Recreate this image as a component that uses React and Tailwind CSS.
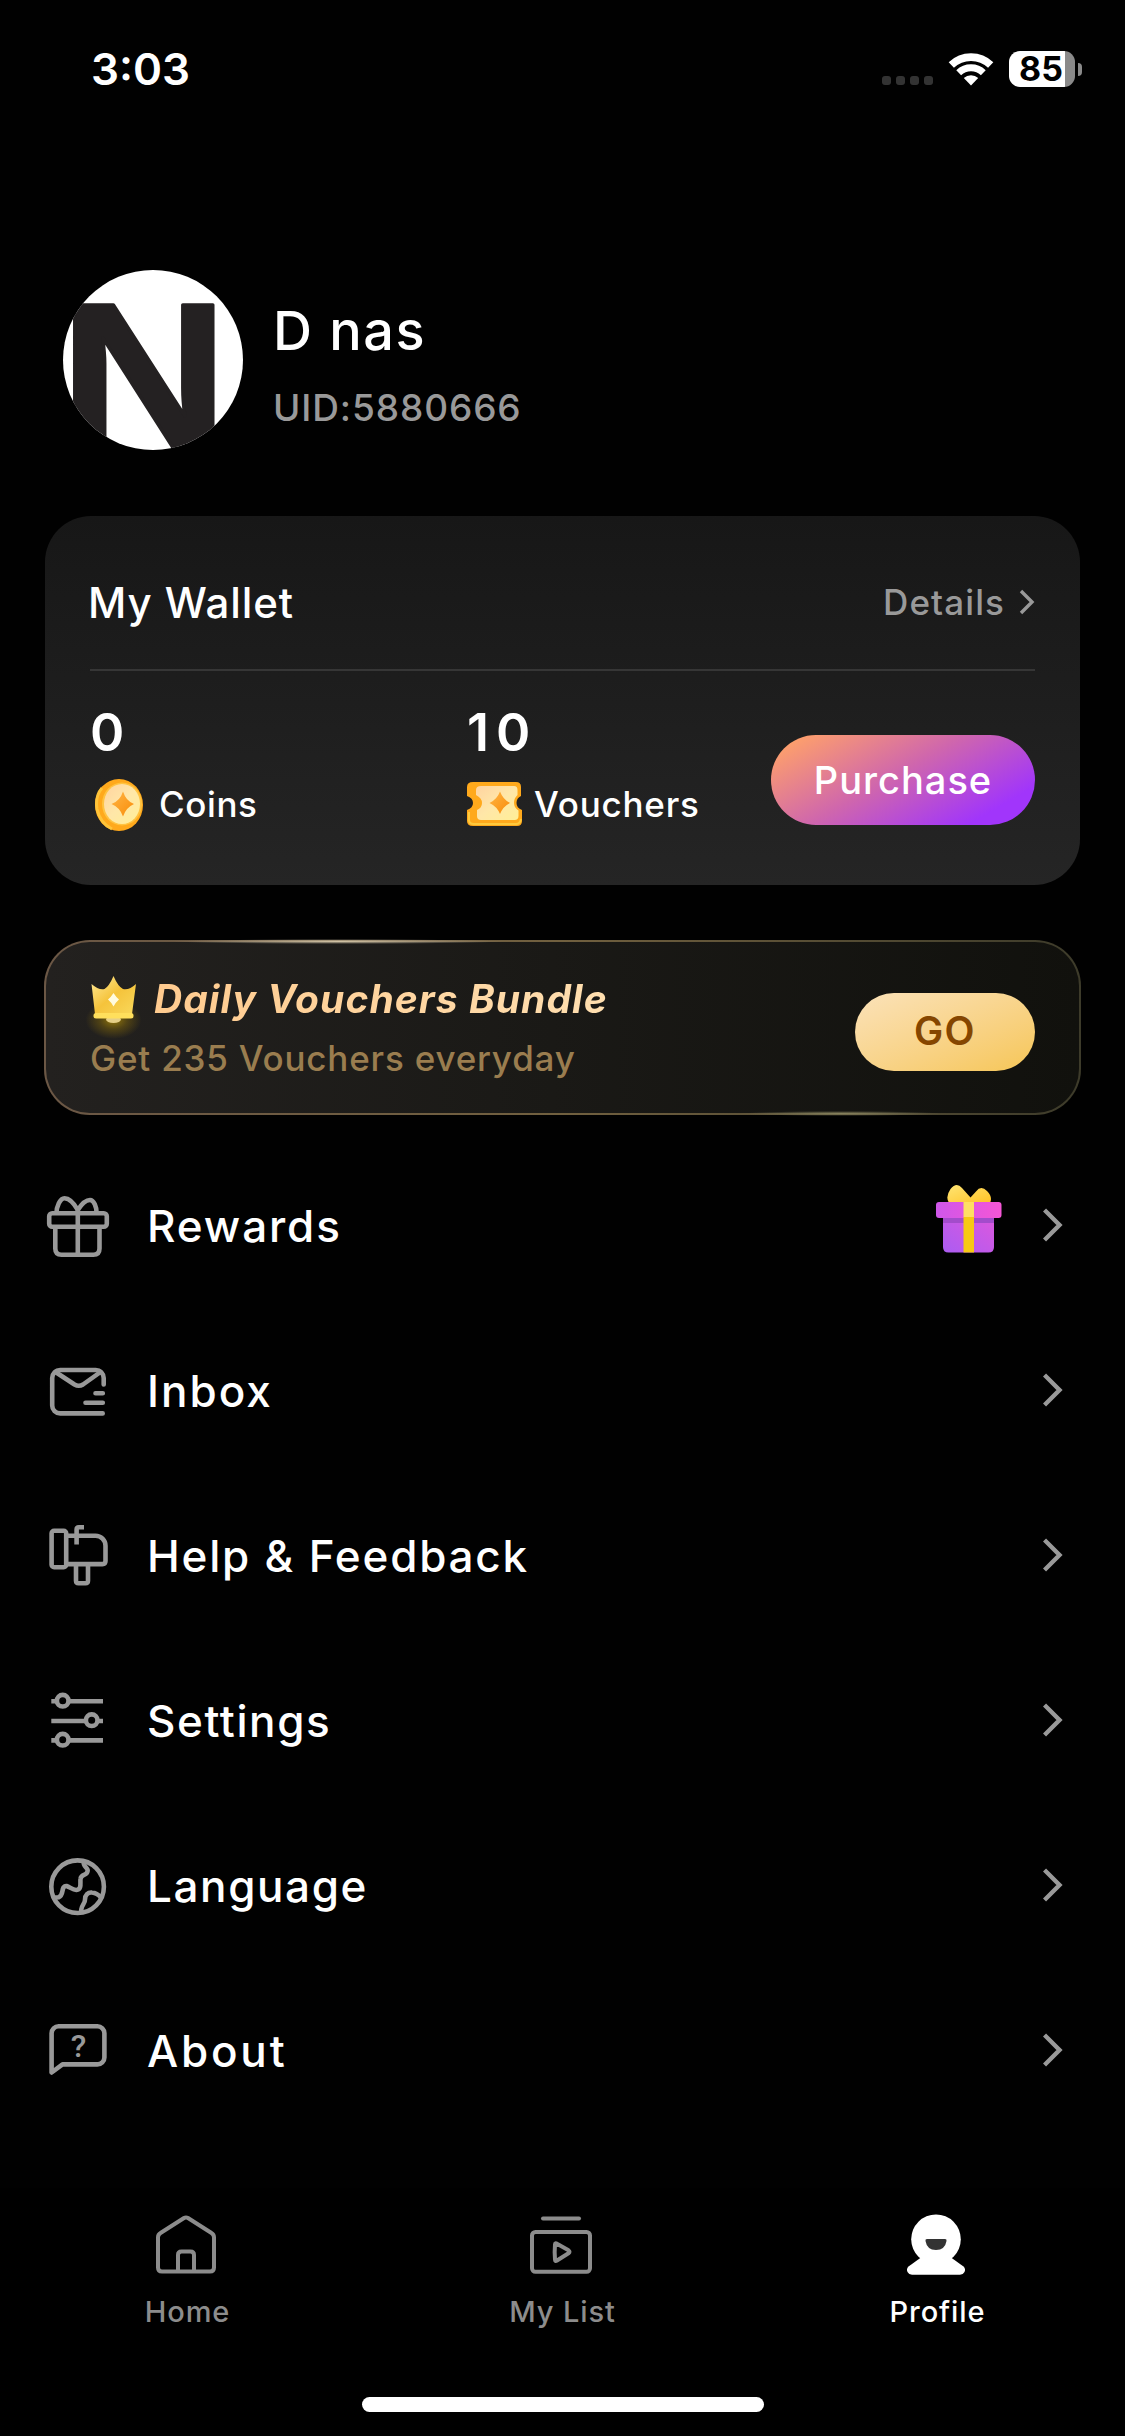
import React, { useState } from 'react';

const iconProps = {
  viewBox: '0 0 66 66',
  fill: 'none',
  stroke: '#999999',
  strokeWidth: 4.6,
  className: 'w-[66px] h-[66px] shrink-0',
};

const GiftIcon = () => (
  <svg {...iconProps} strokeLinejoin="round">
    <rect x="4.2" y="20.2" width="57.6" height="13.6" rx="3" />
    <path d="M10.3 34V55.5q0 6.2 6.2 6.2H48.3q6.2 0 6.2-6.2V34M32.8 17V62" />
    <path d="M11.5 20C11.5 14 15 5.2 19.5 5.2C25 5.2 30 12 32.8 17C36 12 41 7 45 7C49 7 51.6 14 51.6 20" />
  </svg>
);

const InboxIcon = () => (
  <svg {...iconProps} strokeLinecap="round" strokeLinejoin="round">
    <path d="M57.7 55.4H15.2a8 8 0 0 1-8-8V20a8 8 0 0 1 8-8H50.7a8 8 0 0 1 8 8V26.5" />
    <path d="M10.5 14L29.5 26.5Q33.8 29 38 26.5L55.5 14M50.5 35.3H57.8M40.5 44.8H57.8" />
  </svg>
);

const HelpIcon = () => (
  <svg {...iconProps} strokeLinejoin="round">
    <rect x="6.6" y="7.8" width="14.6" height="36.4" rx="2.5" />
    <path d="M21.2 12.8H50.5a10 10 0 0 1 10 10V38.1q0 3-3 3H21.2" />
    <path d="M31 41.5V57.7q0 2.5 2.5 2.5H40.5q2.5 0 2.5-2.5V41.5M31.6 21.5V6.5q0-2.2 2.2-2.2H39" />
  </svg>
);

const SettingsIcon = () => (
  <svg {...iconProps}>
    <path d="M6.3 13.3H12M23.5 13.3H58M6.3 33H41M52.5 33H58M6.3 52.4H12M23.5 52.4H58" />
    <circle cx="17.7" cy="12.7" r="5.8" />
    <circle cx="46.7" cy="32.2" r="5.8" />
    <circle cx="17.7" cy="51.7" r="5.8" />
  </svg>
);

const LanguageIcon = () => (
  <svg {...iconProps} strokeLinejoin="round">
    <circle cx="32.6" cy="33.7" r="26.3" />
    <path d="M38.8 8.5C37.5 14 44 14.5 42.5 18.5C41.5 23 36 21 35.5 26C35 30 37 36.5 31.5 37C26.5 37.5 22 30 18.5 34.5C16.5 38 18.5 42 13.5 44.3Q10.5 44.9 8 44.5" />
    <path d="M36.8 60C34 54 40.5 51 40 46.5C40 42 43 39 47 39.5Q52 40 56 44.5" />
  </svg>
);

const AboutIcon = () => (
  <svg {...iconProps} strokeLinejoin="round">
    <path d="M6.6 54.5V15.3a7 7 0 0 1 7-7H52.4a7 7 0 0 1 7 7V39.4a7 7 0 0 1-7 7H17.5Z" />
    <text x="33.5" y="38.5" textAnchor="middle" fontSize="32" fontWeight="500" fontFamily="Roboto, sans-serif" fill="#999999" stroke="none">
      ?
    </text>
  </svg>
);

const CoinIcon = () => (
  <svg viewBox="0 0 52 54" className="w-[52px] h-[54px] shrink-0">
    <defs>
      <linearGradient id="coinFace" x1="0" y1="0" x2="1" y2="1">
        <stop offset="0" stopColor="#ffd3a0" />
        <stop offset="0.5" stopColor="#ffe7a8" />
        <stop offset="1" stopColor="#ffef96" />
      </linearGradient>
      <linearGradient id="spark" x1="0" y1="0" x2="1" y2="1">
        <stop offset="0" stopColor="#ffb545" />
        <stop offset="1" stopColor="#f98c08" />
      </linearGradient>
    </defs>
    <ellipse cx="25" cy="27" rx="24" ry="26" fill="#ffa91c" />
    <path d="M8 10Q1 18 3 31Q6 45 18 51" fill="none" stroke="#ffc43a" strokeWidth="3" />
    <ellipse cx="28" cy="26" rx="20" ry="21.5" fill="#ffc341" />
    <ellipse cx="28" cy="26" rx="18" ry="20" fill="url(#coinFace)" />
    <path d="M29 13.5Q32 23 40 26Q32 29.5 29 38.5Q26 29.5 17.5 26Q26 23 29 13.5Z" fill="url(#spark)" />
  </svg>
);

const VoucherIcon = () => (
  <svg viewBox="0 0 56 46" className="w-[56px] h-[46px] shrink-0">
    <path d="M6 1H49Q54 1 54 6V15Q49.5 17 49.5 22Q49.5 27 55 29V40Q55 45 50 45H6Q0 45 0 40V29Q6 27 6 22Q6 17 0 15V6Q0 1 6 1Z" fill="#ffa91c" />
    <path d="M2 31V39Q2 43 7 43H49Q53 43 54 38" fill="none" stroke="#ffca3d" strokeWidth="2" />
    <path d="M14 5H47Q50.5 5 50.5 9V14Q47 17 47 22Q47 27 51.5 29.5V35Q51.5 39 47.5 39H14Q10 39 10 35V29Q15 27 15 22Q15 17 9 14V9Q9 5 14 5Z" fill="url(#coinFace)" />
    <path d="M33 10.5Q36 18.5 43 22Q36 25.5 33 33Q30 25.5 22.5 22Q30 18.5 33 10.5Z" fill="url(#spark)" />
  </svg>
);

const CrownIcon = () => (
  <svg viewBox="0 0 46 48" className="w-[46px] h-[48px] shrink-0 overflow-visible">
    <defs>
      <linearGradient id="crown" x1="0" y1="0" x2="1" y2="1">
        <stop offset="0" stopColor="#ffeb9a" />
        <stop offset="0.5" stopColor="#f5c33b" />
        <stop offset="1" stopColor="#f9d95c" />
      </linearGradient>
      <radialGradient id="crownGlow">
        <stop offset="0" stopColor="#d9ae00" stopOpacity="0.65" />
        <stop offset="0.5" stopColor="#b89000" stopOpacity="0.3" />
        <stop offset="1" stopColor="#b89000" stopOpacity="0" />
      </radialGradient>
    </defs>
    <ellipse cx="22.5" cy="44" rx="28" ry="19" fill="url(#crownGlow)" />
    <ellipse cx="22.5" cy="43.5" rx="7.5" ry="3.5" fill="#e6cf86" />
    <path d="M0.5 8Q8 14.5 13.5 13Q18 10.5 22.5 0Q27 10.5 32 13Q38 14.5 45 8L41 38H4Z" fill="url(#crown)" />
    <rect x="2.5" y="37" width="40" height="5.5" rx="2.5" fill="#ffdf5c" />
    <path d="M22.5 17Q25 21 28 23.5Q25 26 22.5 30.5Q20 26 17 23.5Q20 21 22.5 17Z" fill="#fffbe0" />
  </svg>
);

// Coloured present shown on the Rewards row
const PresentIcon = () => (
  <svg viewBox="0 0 66 69" className="w-[66px] h-[69px] shrink-0">
    <defs>
      <linearGradient id="lid" x1="0" y1="0" x2="1" y2="0">
        <stop offset="0" stopColor="#cf57ea" />
        <stop offset="1" stopColor="#f556d6" />
      </linearGradient>
      <linearGradient id="box" x1="0" y1="1" x2="1" y2="0">
        <stop offset="0" stopColor="#ab5cf2" />
        <stop offset="1" stopColor="#dd58de" />
      </linearGradient>
      <linearGradient id="bow" x1="0" y1="0" x2="1" y2="1">
        <stop offset="0" stopColor="#ffe574" />
        <stop offset="1" stopColor="#ffc326" />
      </linearGradient>
    </defs>
    <path d="M13 19Q9 13 14.5 5Q20.5 -2.5 26 4L34.5 13.5L40 7.5Q45 1 51 7Q57 13 54 19Z" fill="url(#bow)" />
    <path d="M7 32H58V63Q58 68.5 52.5 68.5H12.5Q7 68.5 7 63Z" fill="url(#box)" />
    <path d="M7 33H58V39H7Z" fill="#a34ccb" />
    <rect x="0" y="18" width="65.5" height="16" rx="3" fill="url(#lid)" />
    <path d="M27.5 33H38V68.5H27.5Z" fill="#f7c914" />
    <path d="M27.5 18H38V33H27.5Z" fill="#ffdf63" />
  </svg>
);

const HomeIcon = () => (
  <svg viewBox="0 0 66 62" fill="none" stroke="currentColor" strokeWidth="4" strokeLinejoin="round" className="w-[66px] h-[62px]">
    <path d="M9 58.5Q5 58.5 5 54.5V24.5Q5 21.5 7.5 20L31 5Q33 3.8 35 5L58.5 20Q61 21.5 61 24.5V54.5Q61 58.5 57 58.5Z" />
    <path d="M25 58V42Q25 38.5 28.5 38.5H37.5Q41 38.5 41 42V58" />
  </svg>
);

const MyListIcon = () => (
  <svg viewBox="0 0 66 62" fill="none" stroke="currentColor" strokeWidth="4" strokeLinejoin="round" className="w-[66px] h-[62px]">
    <path d="M15 5.5H51" strokeLinecap="round" />
    <rect x="4" y="19" width="58" height="39.8" rx="3.5" />
    <path d="M27 31.5Q27 29.5 29 30.8L40.5 37.3Q42.5 38.8 40.5 40.3L29 47.5Q27 48.7 27 46.5Q26.3 39 27 31.5Z" />
  </svg>
);

const ProfileIcon = () => (
  <svg viewBox="0 0 66 62" fill="currentColor" className="w-[66px] h-[62px]">
    <circle cx="33" cy="26.2" r="24.8" />
    <path d="M18 44.5L5.5 53.5Q3 56 4.5 59Q6 61.8 9 61.8H57Q60 61.8 61.5 59Q63 56 60.5 53.5L48 44.5Z" />
    <path d="M24 26H42Q44 26 43.5 28Q42 37 33 37Q24 37 22.5 28Q22 26 24 26Z" fill="#333333" />
  </svg>
);

const Chevron = () => (
  <svg viewBox="0 0 20 34" fill="none" stroke="#999999" strokeWidth="4.4" className="mb-[2px] w-[20px] h-[34px] shrink-0">
    <path d="M1.5 2L16.5 17L1.5 32" />
  </svg>
);

const menuItems = [
  { label: 'Rewards', icon: GiftIcon, tracking: 'tracking-[1.9px]', hasGift: true },
  { label: 'Inbox', icon: InboxIcon, tracking: 'tracking-[2px]' },
  { label: 'Help & Feedback', icon: HelpIcon, tracking: 'tracking-[1.8px]' },
  { label: 'Settings', icon: SettingsIcon, tracking: 'tracking-[1.6px]' },
  { label: 'Language', icon: LanguageIcon, tracking: 'tracking-[1.6px]' },
  { label: 'About', icon: AboutIcon, tracking: 'tracking-[2.8px]' },
];

const tabs = [
  { label: 'Home', icon: HomeIcon },
  { label: 'My List', icon: MyListIcon },
  { label: 'Profile', icon: ProfileIcon },
];

const StatusBar = () => (
  <div className="h-[138px] flex justify-between pl-[91px] pr-[43px]">
    <span className="mt-[42px] text-[44px] leading-[54px] font-semibold">3:03</span>
    <div className="flex h-[36px] mt-[51px]">
      <div className="flex gap-[5px] items-end pb-[2px]">
        {[0, 1, 2, 3].map((dot) => (
          <span key={dot} className="w-[9px] h-[9px] rounded-[3px] bg-[#333333]" />
        ))}
      </div>
      <svg viewBox="0 0 46 34" className="mt-px w-[46px] h-[34px] ml-[15px]" fill="none" stroke="#ffffff">
        <path d="M3.3 13A28.5 28.5 0 0 1 42.7 13" strokeWidth="7.6" />
        <path d="M10.7 20.7A17.8 17.8 0 0 1 35.3 20.7" strokeWidth="7" />
        <path d="M23 33.5L15.8 26A10.5 10.5 0 0 1 30.2 26Z" fill="#ffffff" stroke="none" />
      </svg>
      <div className="ml-[15px] w-[66px] h-[36px] rounded-[11px] bg-[linear-gradient(90deg,#fff_56px,#8a8a8a_56px)] pl-[10px] text-black text-[34px] leading-[36px] font-bold">
        85
      </div>
      <div className="ml-[3px] mt-[12px] w-[4px] h-[13px] rounded-r-full bg-[#8a8a8a]" />
    </div>
  </div>
);

const App = () => {
  const [activeTab, setActiveTab] = useState('Profile');

  return (
    <div className="w-[1125px] h-[2436px] overflow-hidden bg-[#010101] text-white font-['Inter',sans-serif] flex flex-col">
      <StatusBar />

      {/* User */}
      <div className="mt-[132px] ml-[63px] h-[180px] flex">
        <svg viewBox="0 0 180 180" className="w-[180px] h-[180px] rounded-full bg-white">
          <text
            transform="translate(-4 178) scale(1.13 1)"
            fontFamily="Liberation Sans, sans-serif"
            fontWeight="bold"
            fontSize="208"
            fill="#242122"
            stroke="#242122"
            strokeWidth="3"
            strokeLinejoin="round"
          >
            N
          </text>
        </svg>
        <div className="ml-[30px] pt-[29px]">
          <h1 className="text-[54px] leading-[64px] font-medium tracking-[1.5px]">D nas</h1>
          <p className="mt-[22px] text-[37px] leading-[46px] font-medium text-[#999999] tracking-[0.9px]">UID:5880666</p>
        </div>
      </div>

      {/* Wallet */}
      <div className="mt-[66px] mx-[45px] h-[369px] rounded-[46px] bg-linear-to-b from-[#171717] to-[#252525] px-[45px]">
        <div className="h-[153px] pt-[19px] flex items-center justify-between">
          <h2 className="text-[42px] font-medium tracking-[0.9px] -ml-[2px]">My Wallet</h2>
          <button className="flex items-center text-[35px] font-medium text-[#999999] tracking-[1.1px]">
            Details
            <svg viewBox="0 0 16 26" fill="none" stroke="#999999" strokeWidth="3.4" className="ml-[14px] w-[16px] h-[26px]">
              <path d="M2 2L13 13L2 24" />
            </svg>
          </button>
        </div>
        <div className="h-[2px] bg-[#363636]" />
        <div className="flex">
          <div className="w-[375px] pt-[30px]">
            <p className="text-[52px] leading-[64px] font-semibold">0</p>
            <div className="mt-[13px] h-[54px] flex items-center">
              <div className="w-[69px] pl-[4px]"><CoinIcon /></div>
              <span className="text-[35px] leading-[50px] mb-[2px] font-medium tracking-[0.6px]">Coins</span>
            </div>
          </div>
          <div className="flex-1 pt-[30px]">
            <p className="pl-[2px] text-[52px] leading-[64px] font-semibold tracking-[7px]">10</p>
            <div className="mt-[13px] h-[54px] flex items-center">
              <div className="w-[69px] pl-[2px] pb-[2px]"><VoucherIcon /></div>
              <span className="text-[35px] leading-[50px] mb-[2px] font-medium tracking-[0.8px]">Vouchers</span>
            </div>
          </div>
          <button className="mt-[64px] w-[264px] h-[90px] rounded-[45px] bg-[linear-gradient(150deg,#ffa16a_6%,#cf66ad_46%,#a135fb_84%)] text-[38px] font-medium tracking-[1px]">
            Purchase
          </button>
        </div>
      </div>

      {/* Daily bundle banner */}
      <div className="relative mt-[55px] mx-[44px] h-[175px] rounded-[46px] bg-[linear-gradient(90deg,#6b5745,#71603f_50%,#3d3b2a)] p-[2px]">
        <div className="h-[171px] rounded-[44px] bg-linear-to-r from-[#23211f] to-[#11110d] pl-[45px] pr-[44px] flex items-center justify-between">
          <div>
            <div className="flex items-center h-[60px]">
              <CrownIcon />
              <span className="ml-[17px] pr-2 pb-px text-[39px] leading-[60px] font-bold italic tracking-[1.05px] bg-linear-to-r from-[#ffcb8f] to-[#ffdfb0] bg-clip-text text-transparent">
                Daily Vouchers Bundle
              </span>
            </div>
            <p className="-ml-px text-[35px] leading-[56px] font-medium text-[#9a7d4f] tracking-[0.8px]">Get 235 Vouchers everyday</p>
          </div>
          <button className="mt-[8px] w-[180px] h-[78px] rounded-[39px] bg-linear-to-br from-[#fbe2b9] to-[#f6c655] text-[#854600] text-[39px] font-semibold tracking-[1.5px]">
            GO
          </button>
        </div>
        <span className="absolute top-[-1px] left-[130px] w-[330px] h-[5px] bg-[radial-gradient(closest-side,#cfc1a4,transparent)]" />
        <span className="absolute bottom-[-1px] right-[140px] w-[200px] h-[5px] bg-[radial-gradient(closest-side,#85805c,transparent)]" />
      </div>

      {/* Menu */}
      <div className="mt-[28px] flex-1">
        {menuItems.map(({ label, icon: Icon, tracking, hasGift }) => (
          <button key={label} className="w-full h-[165px] pl-[45px] pr-[62px] flex items-center text-left">
            <Icon />
            <span className={`ml-[36px] flex-1 text-[44px] font-medium ${tracking}`}>{label}</span>
            {hasGift && (
              <div className="mr-[41px] mb-[15px]">
                <PresentIcon />
              </div>
            )}
            <Chevron />
          </button>
        ))}
      </div>

      {/* Bottom tabs */}
      <div className="h-[248px] bg-black flex flex-col items-center">
        <div className="w-full grid grid-cols-3 pt-[25px]">
          {tabs.map(({ label, icon: Icon }) => (
            <button
              key={label}
              onClick={() => setActiveTab(label)}
              className={`flex flex-col items-center ${activeTab === label ? 'text-white' : 'text-[#8c8c8c]'}`}
            >
              <div className="mr-[3px]"><Icon /></div>
              <span className="mt-[17px] text-[29px] leading-[40px] font-medium tracking-[0.9px]">{label}</span>
            </button>
          ))}
        </div>
        <div className="mt-[65px] w-[402px] h-[15px] rounded-full bg-white" />
      </div>
    </div>
  );
};

export default App;
